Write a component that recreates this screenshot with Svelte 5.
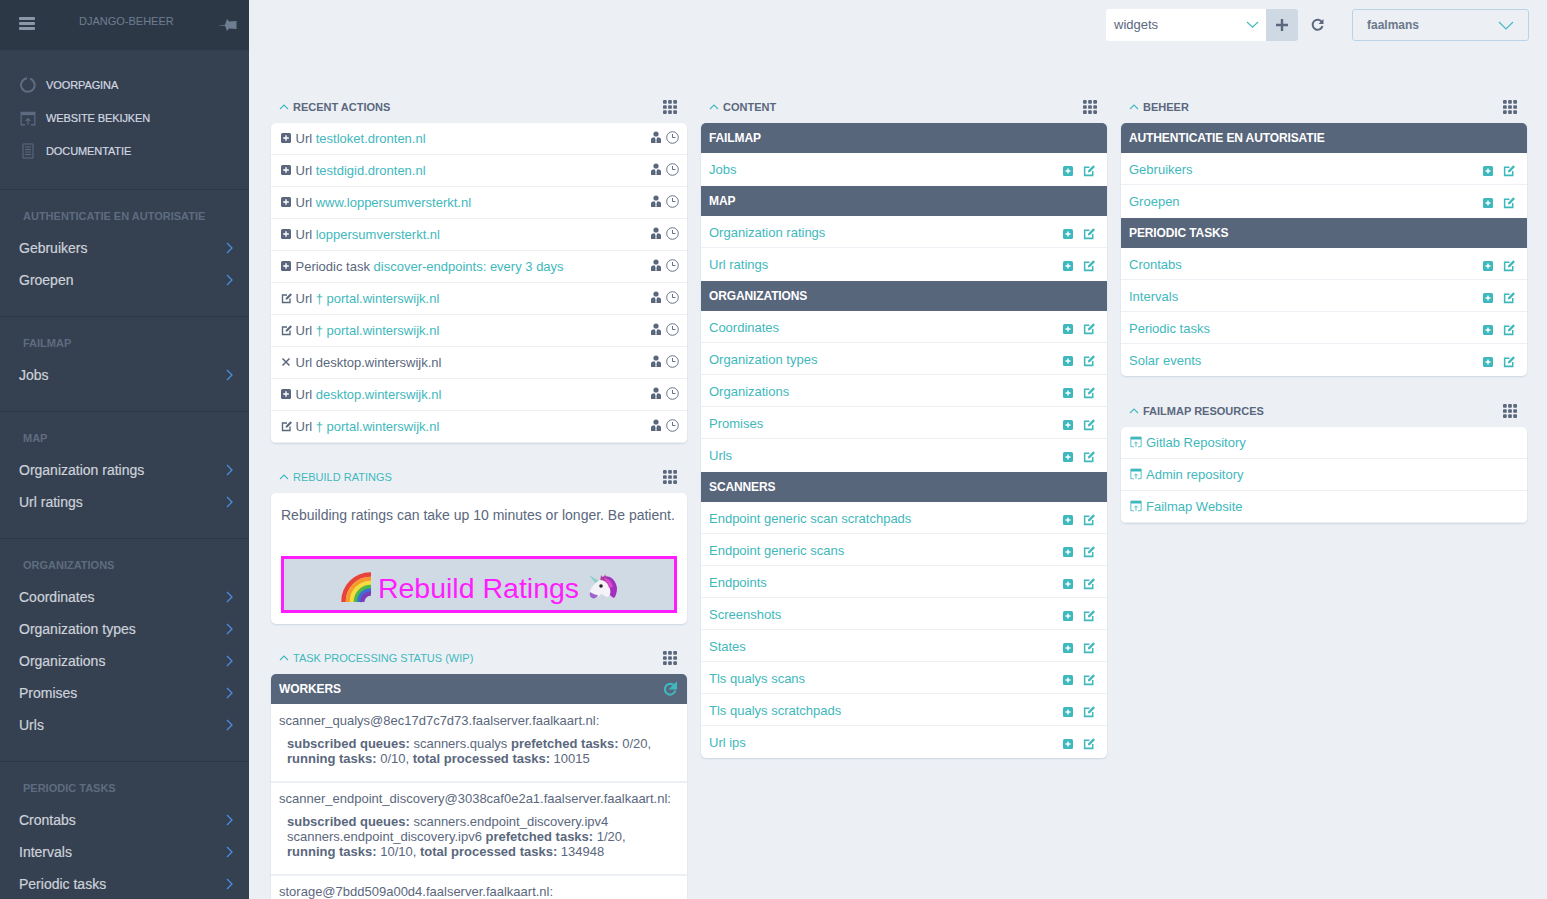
<script>
  const sideGroups = [
    { title: 'AUTHENTICATIE EN AUTORISATIE', items: ['Gebruikers', 'Groepen'] },
    { title: 'FAILMAP', items: ['Jobs'] },
    { title: 'MAP', items: ['Organization ratings', 'Url ratings'] },
    { title: 'ORGANIZATIONS', items: ['Coordinates', 'Organization types', 'Organizations', 'Promises', 'Urls'] },
    { title: 'PERIODIC TASKS', items: ['Crontabs', 'Intervals', 'Periodic tasks'] }
  ];

  const actions = [
    { icon: 'add', pre: 'Url', link: 'testloket.dronten.nl' },
    { icon: 'add', pre: 'Url', link: 'testdigid.dronten.nl' },
    { icon: 'add', pre: 'Url', link: 'www.loppersumversterkt.nl' },
    { icon: 'add', pre: 'Url', link: 'loppersumversterkt.nl' },
    { icon: 'add', pre: 'Periodic task', link: 'discover-endpoints: every 3 days' },
    { icon: 'edit', pre: 'Url', link: '† portal.winterswijk.nl' },
    { icon: 'edit', pre: 'Url', link: '† portal.winterswijk.nl' },
    { icon: 'del', pre: 'Url desktop.winterswijk.nl', link: '' },
    { icon: 'add', pre: 'Url', link: 'desktop.winterswijk.nl' },
    { icon: 'edit', pre: 'Url', link: '† portal.winterswijk.nl' }
  ];

  const content = [
    { title: 'FAILMAP', items: ['Jobs'] },
    { title: 'MAP', items: ['Organization ratings', 'Url ratings'] },
    { title: 'ORGANIZATIONS', items: ['Coordinates', 'Organization types', 'Organizations', 'Promises', 'Urls'] },
    { title: 'SCANNERS', items: ['Endpoint generic scan scratchpads', 'Endpoint generic scans', 'Endpoints', 'Screenshots', 'States', 'Tls qualys scans', 'Tls qualys scratchpads', 'Url ips'] }
  ];

  const beheer = [
    { title: 'AUTHENTICATIE EN AUTORISATIE', items: ['Gebruikers', 'Groepen'] },
    { title: 'PERIODIC TASKS', items: ['Crontabs', 'Intervals', 'Periodic tasks', 'Solar events'] }
  ];

  const resources = ['Gitlab Repository', 'Admin repository', 'Failmap Website'];
</script>

{#snippet grip()}
  <svg class="grip" width="14" height="14" viewBox="0 0 15 15">
    {#each [0, 5.5, 11] as y}
      {#each [0, 5.5, 11] as x}
        <rect x={x} y={y} width="4" height="4" rx="1" />
      {/each}
    {/each}
  </svg>
{/snippet}

{#snippet moduleHead(title, link = false)}
  <div class="module-head">
    <svg class="caret" width="10" height="6" viewBox="0 0 10 6"><path d="M1 5l4-4 4 4" /></svg>
    <span class:link>{title}</span>
    {@render grip()}
  </div>
{/snippet}

{#snippet openIcon(size = 12)}
  <svg class="open-icon" width={size} height={size} viewBox="0 0 14 14">
    <path d="M1 1.5h12v11H9.5M4.500 12.500H1V1.500" />
    <path class="solid" d="M1 1h12v3H1z" />
    <path d="M7 12.500V7M5 8.800L7 6.800l2 2" />
  </svg>
{/snippet}

{#snippet rowIcons()}
  <span class="row-icons">
    <svg class="add-mini" width="10" height="10" viewBox="0 0 10 10">
      <rect width="10" height="10" rx="1.500" />
      <path d="M5 2.500v5M2.500 5h5" />
    </svg>
    <svg class="edit-mini" width="13" height="13" viewBox="0 0 12 12">
      <path d="M9 6.500V10.500H1.500V3H6" />
      <path class="pen" d="M4.500 7.800l.5-2L9.500 1.200l1.500 1.500L6.500 7.300z" />
    </svg>
  </span>
{/snippet}

{#snippet linkGroups(groups)}
  <div class="card">
    {#each groups as group}
      <div class="caption">{group.title}</div>
      {#each group.items as item}
        <div class="row"><span class="link">{item}</span>{@render rowIcons()}</div>
      {/each}
    {/each}
  </div>
{/snippet}

<div class="page">
  <aside class="sidebar">
    <div class="side-head">
      <svg class="burger" width="16" height="13" viewBox="0 0 16 13">
        <rect width="16" height="3" rx="1" />
        <rect y="5" width="16" height="3" rx="1" />
        <rect y="10" width="16" height="3" rx="1" />
      </svg>
      <span class="brand">DJANGO-BEHEER</span>
      <svg class="pin" width="18" height="12" viewBox="0 0 18 12">
        <path d="M0 6.200l6-.5L8 0l2 2.500 7.500-.5v8L10 9.500 8 12 6 6.800l-6-.3z" />
      </svg>
    </div>

    <div class="side-links">
      <div class="side-link">
        <svg width="16" height="16" viewBox="0 0 16 16"><path class="ring" d="M10 1.600A6.800 6.800 0 1 1 7 1.300" /></svg>
        VOORPAGINA
      </div>
      <div class="side-link">
        <svg width="16" height="16" viewBox="0 0 14 14"><path class="ring thin" d="M4.500 13H1V2h12v11H9.500" /><path class="fill" d="M1 2h12v2.500H1z" /><path class="ring thin" d="M7 13V7.500M5 9.500l2-2 2 2" /></svg>
        WEBSITE BEKIJKEN
      </div>
      <div class="side-link">
        <svg width="16" height="16" viewBox="0 0 16 16"><path class="ring thin" d="M3 1h10v14H3zM5 4h6M5 6.500h6M5 9h6M5 11.500h6" /></svg>
        DOCUMENTATIE
      </div>
    </div>

    {#each sideGroups as group}
      <section class="side-group">
        <div class="side-title">{group.title}</div>
        {#each group.items as item}
          <div class="side-item">
            <span>{item}</span>
            <svg width="7" height="12" viewBox="0 0 7 12"><path d="M1 1l5 5-5 5" /></svg>
          </div>
        {/each}
      </section>
    {/each}
  </aside>

  <main class="main">
    <header class="topbar">
      <div class="picker">
        <div class="picker-select">
          <span>widgets</span>
          <svg width="13" height="7" viewBox="0 0 13 7"><path d="M1 1l5.500 5.200L12 1" /></svg>
        </div>
        <div class="picker-add">
          <svg width="12" height="12" viewBox="0 0 12 12"><path d="M6 0v12M0 6h12" /></svg>
        </div>
      </div>
      <svg class="reload" width="13" height="14" viewBox="0 0 13 14">
        <path d="M11 4.200A5 5 0 1 0 11.500 8" />
        <path class="tip" d="M12.500 1v5h-5z" />
      </svg>
      <div class="user-select">
        <span>faalmans</span>
        <svg width="16" height="9" viewBox="0 0 16 9"><path d="M1 1l7 7 7-7" /></svg>
      </div>
    </header>

    <div class="columns">
      <div class="column">
        <section class="module">
          {@render moduleHead('RECENT ACTIONS')}
          <div class="card">
            {#each actions as action}
              <div class="row action">
                <span class="action-icon">
                  {#if action.icon === 'add'}
                    <svg width="10" height="10" viewBox="0 0 10 10"><rect class="box" width="10" height="10" rx="1.500" /><path class="plus" d="M5 2.200v5.600M2.200 5h5.600" /></svg>
                  {:else if action.icon === 'edit'}
                    <svg width="12" height="12" viewBox="0 0 12 12"><path class="line" d="M9 6.500V10.500H1.500V3H6" /><path class="nib" d="M4.500 7.800l.5-2L9.500 1.200l1.500 1.500L6.500 7.300z" /></svg>
                  {:else}
                    <svg width="10" height="10" viewBox="0 0 10 10"><path class="line cross" d="M1.500 1.500l7 7M8.500 1.500l-7 7" /></svg>
                  {/if}
                </span>
                <span class="action-text">{action.pre} {#if action.link}<span class="link">{action.link}</span>{/if}</span>
                <span class="meta">
                  <svg width="10" height="12" viewBox="0 0 10 12"><circle class="head" cx="5" cy="3" r="2.600" /><path class="head" d="M0 12V8.500C0 7 1.500 6.500 3.500 6.300L4.500 8v4zM10 12V8.500C10 7 8.500 6.500 6.500 6.300L5.500 8v4z" /></svg>
                  <svg width="13" height="13" viewBox="0 0 13 13"><circle class="clock" cx="6.500" cy="6.500" r="5.800" /><path class="clock" d="M6.500 3v3.500h3" /></svg>
                </span>
              </div>
            {/each}
          </div>
        </section>

        <section class="module">
          {@render moduleHead('REBUILD RATINGS', true)}
          <div class="card rebuild">
            <p>Rebuilding ratings can take up 10 minutes or longer. Be patient.</p>
            <div class="rebuild-button">
              <svg class="rainbow" width="31" height="31" viewBox="0 0 31 31">
                <path d="M2.500 30A27 27 0 0 1 30 2.500" stroke="#e8423a" />
                <path d="M7 30A22.500 22.500 0 0 1 30 7" stroke="#f79a2c" />
                <path d="M11 30A18.500 18.500 0 0 1 30 11" stroke="#f7dc3f" />
                <path d="M15 30A14.500 14.500 0 0 1 30 15" stroke="#4fb848" />
                <path d="M18.500 30A11 11 0 0 1 30 18.500" stroke="#3b6fd8" />
                <path d="M21.500 30A8 8 0 0 1 30 21.500" stroke="#7a3fb8" />
              </svg>
              <span class="rebuild-label">Rebuild Ratings</span>
              <svg class="unicorn" width="29" height="27" viewBox="0 0 29 27">
                <path d="M13 4c8-3 15 2 16 11 0 4-1 8-3 10-4-2-7-6-8-12z" fill="#a22fc0" />
                <path d="M12 9l1-7 3 6zM15 9l2-8 3 8z" fill="#b6408f" />
                <path d="M8 11L1 2l10 6z" fill="#8ed0c8" />
                <path d="M12 7c5 0 9 4 10 9 1 4 0 7-3 8-3-1-4-3-6-3-2 2-5 5-8 4-3-2-4-4-3-7 2-4 4-8 10-11z" fill="#f6f3f8" />
                <circle cx="13" cy="13" r="1.800" fill="#26222c" />
                <path d="M2 19c2 1 5 3 8 3-1 3-4 4-6 3-2-1-3-4-2-6z" fill="#9c66c8" />
                <path d="M16 5c5 0 8 4 9 9l-4 1c-1-4-3-7-5-10z" fill="#d44fc7" />
              </svg>
            </div>
          </div>
        </section>

        <section class="module">
          {@render moduleHead('TASK PROCESSING STATUS (WIP)', true)}
          <div class="card">
            <div class="caption workers">
              WORKERS
              <svg class="reload teal" width="14" height="15" viewBox="0 0 13 14">
                <path d="M11 4.200A5 5 0 1 0 11.500 8" />
                <path class="tip" d="M12.500 1v5h-5z" />
              </svg>
            </div>
            <div class="worker">
              <div>scanner_qualys@8ec17d7c7d73.faalserver.faalkaart.nl:</div>
              <div class="worker-info">
                <b>subscribed queues:</b> scanners.qualys <b>prefetched tasks:</b> 0/20,<br />
                <b>running tasks:</b> 0/10, <b>total processed tasks:</b> 10015
              </div>
            </div>
            <div class="worker">
              <div>scanner_endpoint_discovery@3038caf0e2a1.faalserver.faalkaart.nl:</div>
              <div class="worker-info">
                <b>subscribed queues:</b> scanners.endpoint_discovery.ipv4<br />
                scanners.endpoint_discovery.ipv6 <b>prefetched tasks:</b> 1/20,<br />
                <b>running tasks:</b> 10/10, <b>total processed tasks:</b> 134948
              </div>
            </div>
            <div class="worker">
              <div>storage@7bdd509a00d4.faalserver.faalkaart.nl:</div>
            </div>
          </div>
        </section>
      </div>

      <div class="column">
        <section class="module">
          {@render moduleHead('CONTENT')}
          {@render linkGroups(content)}
        </section>
      </div>

      <div class="column">
        <section class="module">
          {@render moduleHead('BEHEER')}
          {@render linkGroups(beheer)}
        </section>
        <section class="module resources">
          {@render moduleHead('FAILMAP RESOURCES')}
          <div class="card">
            {#each resources as res}
              <div class="row resource">
                {@render openIcon(12)}
                <span class="link">{res}</span>
              </div>
            {/each}
          </div>
        </section>
      </div>
    </div>
  </main>
</div>

<style>
  :global(body) {
    margin: 0;
    background: #ecf0f5;
    overflow: hidden;
  }

  .page {
    display: flex;
    height: 899px;
    overflow: hidden;
    font-family: 'Liberation Sans', Arial, sans-serif;
    color: #5a677d;
  }

  /* sidebar */
  .sidebar {
    flex: 0 0 249px;
    background: #354051;
    overflow: hidden;
  }

  .side-head {
    position: relative;
    height: 50px;
    background: #2d3847;
  }

  .burger {
    position: absolute;
    left: 19px;
    top: 17px;
    fill: #8b96a8;
  }

  .brand {
    position: absolute;
    left: 79px;
    top: 14px;
    font-size: 11px;
    line-height: 14px;
    color: #6f7d92;
  }

  .pin {
    position: absolute;
    left: 219px;
    top: 19px;
    fill: #6f7d92;
  }

  .side-links {
    padding: 18px 0 22px;
    border-bottom: 1px solid #2d3847;
  }

  .side-link {
    display: flex;
    align-items: center;
    gap: 10px;
    height: 33px;
    padding-left: 20px;
    font-size: 11px;
    letter-spacing: -0.1px;
    color: #d3d8e0;
    -webkit-text-stroke: 0.2px;
  }

  .ring {
    fill: none;
    stroke: #5f6d83;
    stroke-width: 2;
  }

  .ring.thin {
    stroke-width: 1;
  }

  .fill {
    fill: #5f6d83;
  }

  .side-group {
    padding: 10px 0 20px;
    border-bottom: 1px solid #2d3847;
  }

  .side-title {
    height: 32px;
    padding-left: 23px;
    font-size: 11px;
    font-weight: bold;
    line-height: 32px;
    color: #5f6c80;
  }

  .side-item {
    display: flex;
    justify-content: space-between;
    align-items: center;
    height: 32px;
    padding: 0 16px 0 19px;
    font-size: 14px;
    color: #cdd2da;
    -webkit-text-stroke: 0.2px;
  }

  .side-item svg path {
    fill: none;
    stroke: #4a8fe0;
    stroke-width: 1.3;
  }

  /* top bar */
  .main {
    flex: 1;
    min-width: 0;
    padding: 0 20px 0 22px;
  }

  .topbar {
    display: flex;
    justify-content: flex-end;
    align-items: flex-start;
    height: 97px;
    box-sizing: border-box;
    padding-top: 9px;
    margin-right: -2px;
  }

  .picker {
    display: flex;
    height: 32px;
  }

  .picker-select {
    display: flex;
    justify-content: space-between;
    align-items: center;
    box-sizing: border-box;
    width: 160px;
    padding: 0 7px 2px 8px;
    background: #fff;
    border-radius: 3px 0 0 3px;
    font-size: 13px;
  }

  .picker-select path,
  .user-select path {
    fill: none;
    stroke: #3fb8bd;
    stroke-width: 1.1;
  }

  .picker-add {
    display: flex;
    justify-content: center;
    align-items: center;
    width: 32px;
    background: #cfd9e4;
    border-radius: 0 3px 3px 0;
  }

  .picker-add path {
    fill: none;
    stroke: #5a677d;
    stroke-width: 2.4;
  }

  .reload {
    flex: none;
  }

  .topbar > .reload {
    margin: 9px 28px 0 13px;
  }

  .reload path {
    fill: none;
    stroke: #5a677d;
    stroke-width: 2;
  }

  .reload path.tip {
    fill: #5a677d;
    stroke: none;
  }

  .reload.teal path {
    stroke: #3fb8bd;
  }

  .reload.teal path.tip {
    fill: #3fb8bd;
  }

  .user-select {
    display: flex;
    justify-content: space-between;
    align-items: center;
    box-sizing: border-box;
    width: 177px;
    height: 32px;
    padding: 0 14px;
    border: 1px solid #bcd3e6;
    border-radius: 3px;
    font-size: 12px;
    font-weight: bold;
    color: #6b788c;
  }

  /* dashboard columns */
  .columns {
    display: grid;
    grid-template-columns: 416px 406px 406px;
    gap: 14px;
    align-items: start;
  }

  .module + .module {
    margin-top: 24px;
  }

  .module.resources {
    margin-top: 25px;
  }

  .module-head {
    display: flex;
    align-items: center;
    height: 20px;
    margin-bottom: 6px;
    padding: 0 10px 0 8px;
    font-size: 11px;
    font-weight: bold;
  }

  .module-head span.link {
    font-weight: normal;
  }

  .caret {
    margin-right: 4px;
  }

  .caret path {
    fill: none;
    stroke: #3fb8bd;
    stroke-width: 1.1;
  }

  .grip {
    margin-left: auto;
    fill: #5a677d;
  }

  .card {
    background: #fff;
    border-radius: 5px;
    box-shadow: 0 1px 2px #ccd6e0;
    overflow: hidden;
  }

  .caption {
    display: flex;
    justify-content: space-between;
    align-items: center;
    height: 30px;
    padding: 0 8px;
    background: #58667c;
    font-size: 12px;
    font-weight: bold;
    letter-spacing: -0.12px;
    color: #fff;
  }

  .row + .caption {
    margin-top: 1px;
  }

  .row {
    display: flex;
    justify-content: space-between;
    align-items: center;
    box-sizing: border-box;
    height: 32px;
    padding: 0 11px 0 8px;
    box-shadow: inset 0 -1px #ecf0f5;
    font-size: 13px;
  }

  .row:last-child,
  .row:has(+ .caption) {
    box-shadow: none;
  }

  .link {
    color: #3fb8bd;
  }

  .row-icons {
    display: flex;
    align-items: center;
    gap: 10px;
    margin-top: 3px;
  }

  .add-mini rect {
    fill: #3fb8bd;
  }

  .add-mini path {
    fill: none;
    stroke: #fff;
    stroke-width: 1.4;
  }

  .edit-mini path {
    fill: none;
    stroke: #3fb8bd;
    stroke-width: 1.4;
  }

  .edit-mini path.pen {
    fill: #3fb8bd;
    stroke: none;
  }

  /* recent actions */
  .row.action,
  .row.resource {
    border-bottom: 1px solid #ecf0f5;
    box-shadow: none;
  }

  .action {
    justify-content: flex-start;
    padding: 0 8px 0 10px;
  }

  .action-icon {
    display: flex;
    flex: 0 0 14.5px;
    margin-top: -2px;
  }

  .action-text {
    white-space: nowrap;
  }

  .box {
    fill: #5a677d;
  }

  .plus {
    fill: none;
    stroke: #fff;
    stroke-width: 1.4;
  }

  .line {
    fill: none;
    stroke: #5a677d;
    stroke-width: 1.4;
  }

  .line.cross {
    stroke-width: 1.5;
  }

  .nib {
    fill: #5a677d;
  }

  .meta {
    display: flex;
    align-items: center;
    gap: 5px;
    margin-left: auto;
    margin-top: -3px;
  }

  .head {
    fill: #5a677d;
  }

  .clock {
    fill: none;
    stroke: #5a677d;
    stroke-width: 0.9;
  }

  /* rebuild ratings */
  .rebuild {
    box-sizing: border-box;
    height: 131px;
    padding: 14px 10px 0;
  }

  .rebuild p {
    margin: 0 0 33px;
    font-size: 14px;
    line-height: 16px;
    white-space: nowrap;
  }

  .rebuild-button {
    display: flex;
    justify-content: center;
    align-items: center;
    gap: 6px;
    box-sizing: border-box;
    height: 57px;
    background: #d0dae4;
    border: 3px solid #ff1dff;
    font-size: 28.5px;
    color: #ff1dff;
  }

  .rebuild-label {
    margin-top: 7px;
  }

  .rainbow {
    margin-top: 5px;
  }

  .rainbow path {
    fill: none;
    stroke-width: 4.500;
  }

  .unicorn {
    margin: 3px 0 0 3px;
  }

  /* workers */
  .workers {
    padding-right: 10px;
  }

  .worker {
    padding: 8px 8px 15px;
    border-bottom: 2px solid #ecf0f5;
    font-size: 13px;
    line-height: 16px;
  }

  .caption + .worker {
    padding-top: 9px;
  }

  .worker:last-child {
    border-bottom: 0;
  }

  .worker-info {
    margin-top: 7px;
    padding-left: 8px;
    line-height: 15px;
  }

  /* resources */
  .resource {
    justify-content: flex-start;
    gap: 4px;
    padding-left: 9px;
  }

  .open-icon {
    margin-top: -1px;
  }

  .open-icon path {
    fill: none;
    stroke: #3fb8bd;
    stroke-width: 1;
  }

  .open-icon path.solid {
    fill: #3fb8bd;
    stroke: none;
  }
</style>
